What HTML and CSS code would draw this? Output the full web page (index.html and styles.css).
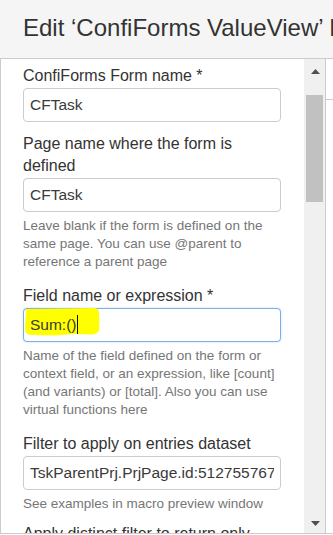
FILE: index.html
```html
<!DOCTYPE html>
<html>
<head>
<meta charset="utf-8">
<title>Edit ConfiForms ValueView Macro</title>
<link rel="stylesheet" href="styles.css">
</head>
<body>
<div class="header">
  <h1 class="title">Edit ‘ConfiForms ValueView’ Macro</h1>
</div>
<div class="main">
  <div class="panel">
    <div class="group group-plain">
      <div class="label">ConfiForms Form name *</div>
      <div class="field"><span class="val">CFTask</span></div>
    </div>
    <div class="group">
      <div class="label">Page name where the form is<br>defined</div>
      <div class="field"><span class="val">CFTask</span></div>
      <div class="help">Leave blank if the form is defined on the<br>same page. You can use @parent to<br>reference a parent page</div>
    </div>
    <div class="group">
      <div class="label">Field name or expression *</div>
      <div class="field field-focus">
        <svg class="marker" width="76" height="28" viewBox="0 0 76 28"><path d="M2,1 L40,0.5 L71,0 Q75.5,1 75,6 L75.5,20 Q75,26 68,26.5 L50,26 L30,27.5 L8,27 Q1.5,27 1,21 Z" fill="#ffff00"/></svg>
        <span class="val val-on-marker">Sum:()<span class="caret"></span></span>
      </div>
      <div class="help">Name of the field defined on the form or<br>context field, or an expression, like [count]<br>(and variants) or [total]. Also you can use<br>virtual functions here</div>
    </div>
    <div class="group">
      <div class="label">Filter to apply on entries dataset</div>
      <div class="field"><span class="val">TskParentPrj.PrjPage.id:5127557670</span></div>
      <div class="help help-last">See examples in macro preview window</div>
    </div>
    <div class="group">
      <div class="label">Apply distinct filter to return only</div>
    </div>
  </div>
  <div class="scrollbar">
    <div class="sb-btn sb-up"><svg width="9" height="5" viewBox="0 0 9 5"><path d="M0,5 L4.5,0 L9,5 Z" fill="#505050"/></svg></div>
    <div class="sb-thumb"></div>
    <div class="sb-fill"></div>
    <div class="sb-btn sb-down"><svg width="9" height="5" viewBox="0 0 9 5"><path d="M0,0 L9,0 L4.5,5 Z" fill="#505050"/></svg></div>
  </div>
  <div class="side">
    <div class="side-top"></div>
  </div>
</div>
</body>
</html>
```

FILE: styles.css
```css
html, body {
  margin: 0;
  padding: 0;
  background: #ffffff;
  overflow: hidden;
}
body {
  font-family: "Liberation Sans", Arial, sans-serif;
  color: #333333;
  width: 333px;
  height: 535px;
}
.header {
  height: 58px;
  background: #f5f5f5;
  border-bottom: 1px solid #cccccc;
  overflow: hidden;
  white-space: nowrap;
}
.title {
  margin: 0;
  padding-left: 23px;
  font-size: 24px;
  font-weight: normal;
  line-height: 55px;
  color: #333333;
}
.main {
  display: flex;
  height: 474px;
  border-bottom: 1px solid #cccccc;
}
.panel {
  width: 281px;
  flex: none;
  border-left: 1px solid #cccccc;
  padding: 6px 0 0 22px;
  overflow: hidden;
}
.group {
  width: 258px;
}
.group-plain {
  margin-bottom: 10.5px;
}
.label {
  font-size: 16px;
  line-height: 22px;
  color: #333333;
  margin-bottom: 1px;
  white-space: nowrap;
}
.field {
  position: relative;
  box-sizing: border-box;
  height: 34px;
  border: 1px solid #cccccc;
  border-radius: 4px;
  padding: 0 6px;
  display: flex;
  align-items: center;
  background: #ffffff;
}
.field-focus {
  border-color: #7eaee6;
  box-shadow: 0 0 2px rgba(102, 175, 233, 0.5);
}
.val {
  display: block;
  overflow: hidden;
  white-space: nowrap;
  font-size: 15.5px;
  color: #3a3a3a;
  line-height: 20px;
}
.val-on-marker {
  position: relative;
  display: flex;
  align-items: center;
  overflow: visible;
}
.marker {
  position: absolute;
  left: 0;
  top: -1px;
}
.caret {
  display: inline-block;
  width: 0;
  height: 19px;
  border-left: 1px solid #111111;
  margin-left: 0;
}
.help {
  font-size: 13.5px;
  line-height: 18px;
  color: #767676;
  margin-top: 5.5px;
  margin-bottom: 13.5px;
  white-space: nowrap;
}
.help-last {
  margin-bottom: 10px;
}
.scrollbar {
  width: 21px;
  flex: none;
  background: #f0f0f0;
  display: flex;
  flex-direction: column;
}
.sb-btn {
  display: flex;
  align-items: center;
  justify-content: center;
  padding-left: 1px;
}
.sb-up {
  height: 24px;
}
.sb-down {
  height: 20px;
}
.sb-thumb {
  margin: 12px 0 0 2px;
  width: 17px;
  height: 107px;
  background: #c1c1c1;
}
.sb-fill {
  flex: 1;
}
.side {
  flex: 1;
  border-left: 1px solid #cccccc;
  background: #ffffff;
}
.side-top {
  height: 40px;
  border-bottom: 1px solid #cccccc;
}
```
